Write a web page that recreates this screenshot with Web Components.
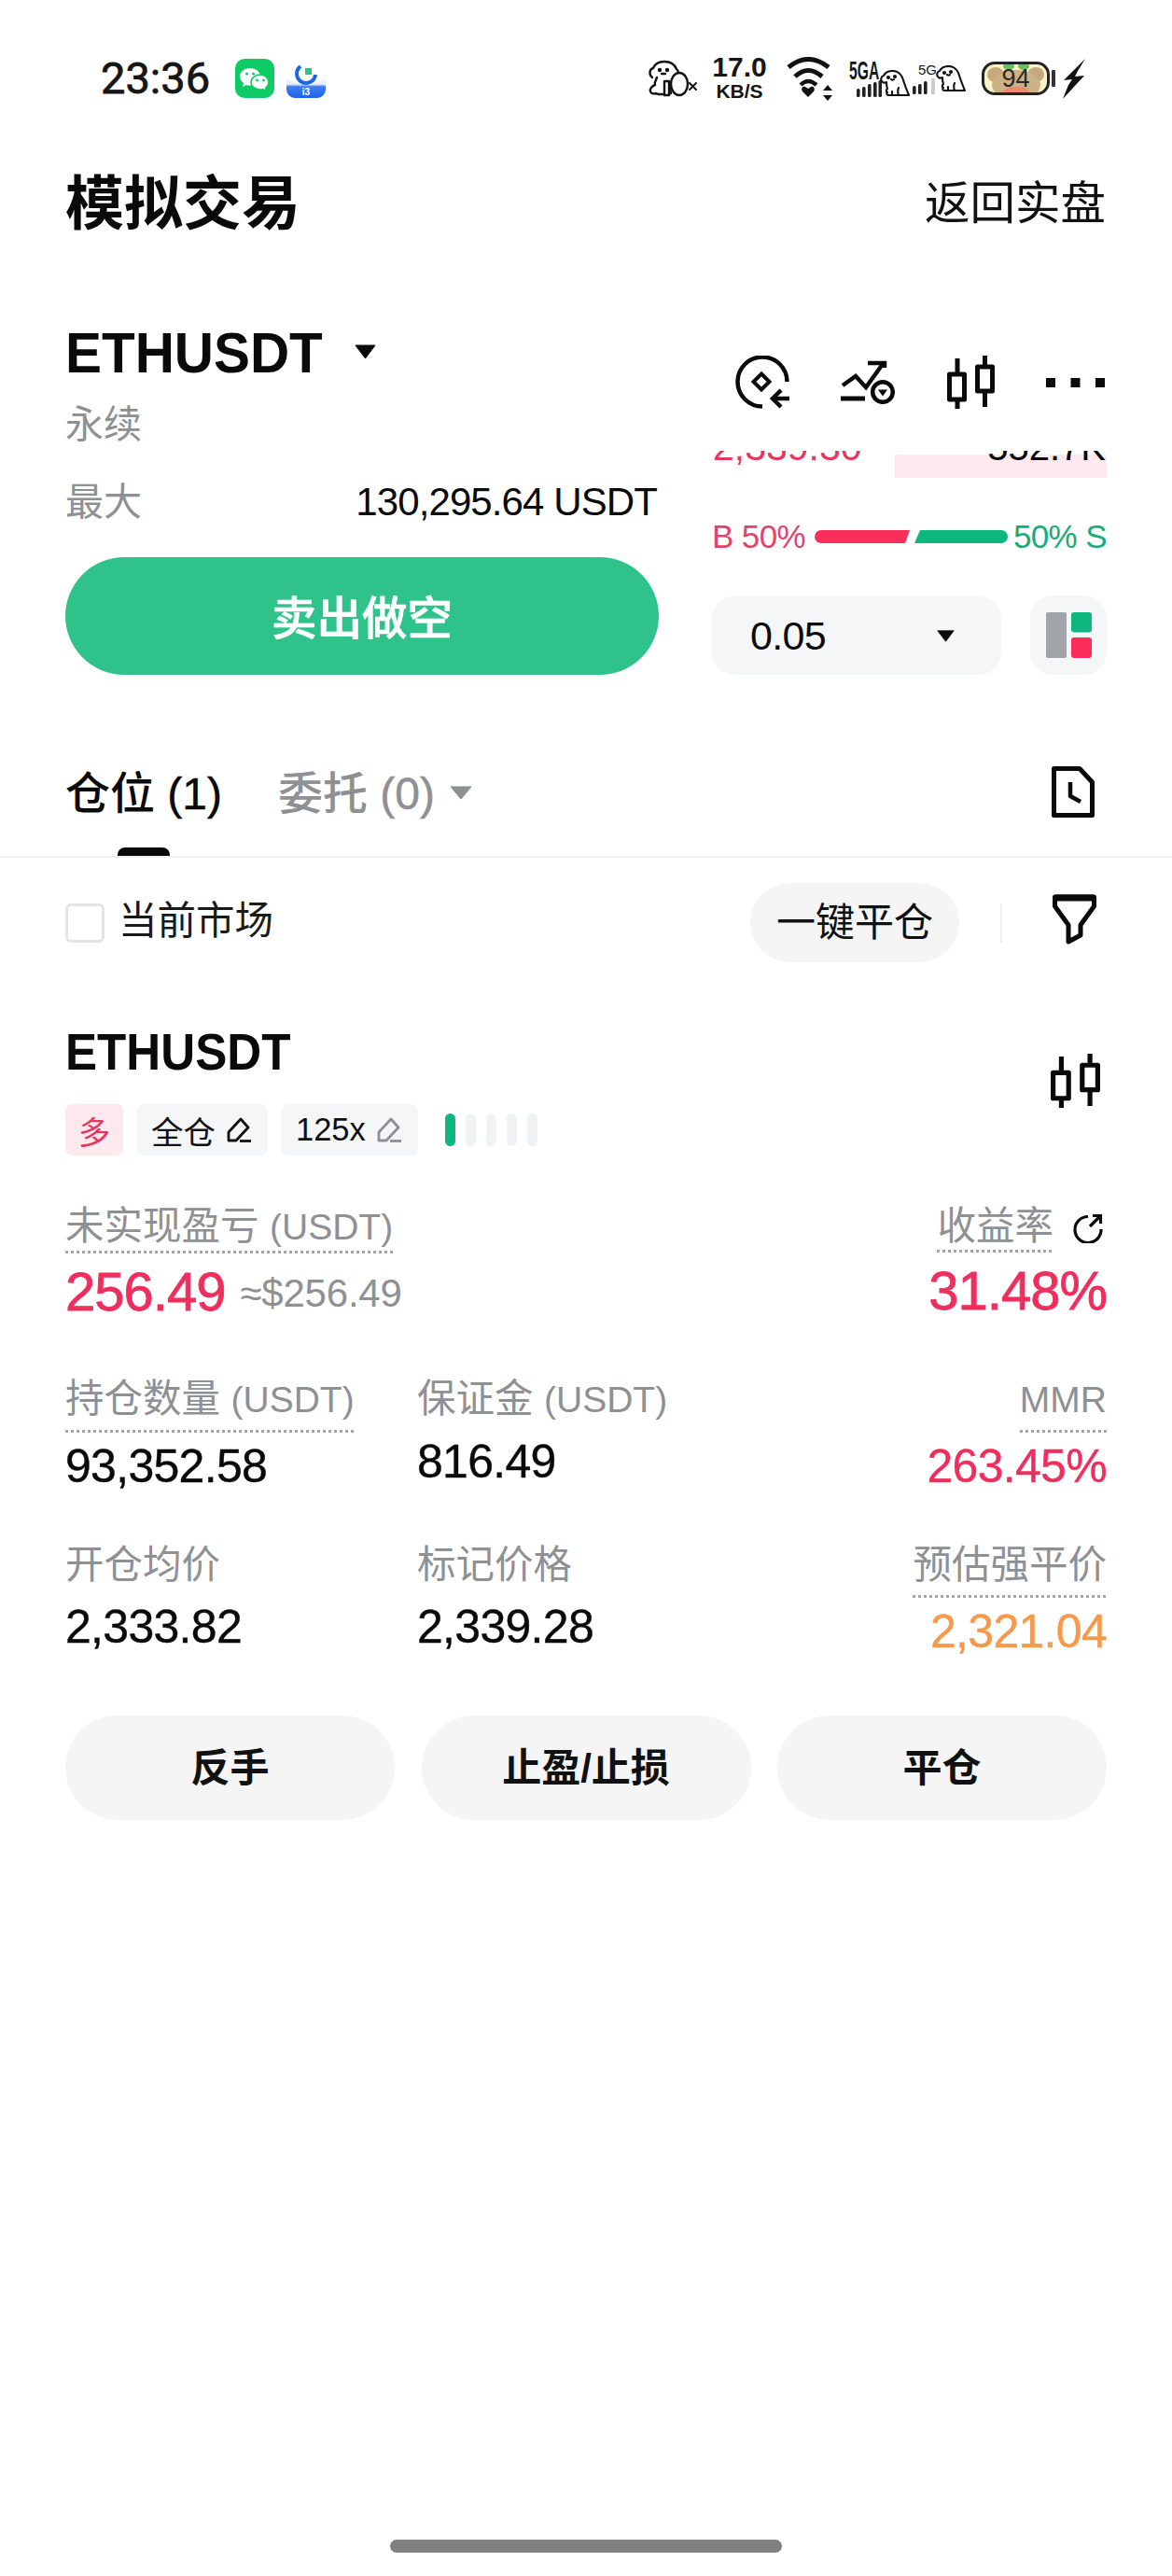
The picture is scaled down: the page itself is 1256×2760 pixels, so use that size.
<!DOCTYPE html>
<html lang="zh"><head><meta charset="utf-8"><title>模拟交易</title>
<style>
html,body{margin:0;padding:0;background:#fff}
body{width:1256px;height:2760px;overflow:hidden;font-family:"Liberation Sans","Noto Sans CJK SC",sans-serif;color:#0a0a0a}
</style></head><body>
<x-app>
  <x-status-bar></x-status-bar>
  <x-nav-header><span slot="title">模拟交易</span><span slot="action">返回实盘</span></x-nav-header>
  <x-trade-panel></x-trade-panel>
  <x-order-tabs></x-order-tabs>
  <x-filter-row></x-filter-row>
  <x-position-card></x-position-card>
  <x-home-bar></x-home-bar>
</x-app>
<script>
const dog=(w,h)=>`<svg width="${w}" height="${h}" viewBox="0 0 32 29" fill="#fff" stroke="#111" stroke-width="2.100" stroke-linejoin="round" stroke-linecap="round"><path d="M3 13C0 11 1 7 4 6 6 2 10 1 14 1c5 0 8 3 10 7 2 6 4 12 7 19H9c-2 0-2-2-1-3-2-1-1-3 0-4-1-3-1-5-1-7-2 1-3 1-4 0z"/><path d="M20 27c-1-3-1-6 0-8M13 27v-4" fill="none"/><circle cx="9" cy="8" r="1" fill="#111"/><circle cx="16" cy="7" r="1" fill="#111"/><path d="M12 10c1 1 2 1 3 0" fill="none"/></svg>`;
const ICONS={
 wechat:`<svg width="42" height="42" viewBox="0 0 42 42"><rect width="42" height="42" rx="10" fill="#0ecb66"/><path d="M16 10c-6 0-11 4-11 9 0 3 2 5 4 7l-1 4 4-2c1 .4 2 .5 4 .5 6 0 11-4 11-9.500S22 10 16 10z" fill="#fff"/><path d="M27 17c-5.500 0-10 3.500-10 8s4.500 8 10 8c1 0 2 0 3-.4l3.500 2-.8-3.500c2-1.500 3.300-3.600 3.300-6.100 0-4.500-4.500-8-9-8z" fill="#fff" stroke="#0ecb66" stroke-width="1.500"/><circle cx="12.500" cy="16" r="1.500" fill="#0ecb66"/><circle cx="19.500" cy="16" r="1.500" fill="#0ecb66"/><circle cx="23.500" cy="23" r="1.400" fill="#0ecb66"/><circle cx="30.500" cy="23" r="1.400" fill="#0ecb66"/></svg>`,
 bowl:`<svg width="42" height="37" viewBox="0 0 42 37"><defs><linearGradient id="g" x1="0" y1="0" x2="0" y2="1"><stop offset="0" stop-color="#f3f5fb"/><stop offset=".3" stop-color="#e6ecfa"/><stop offset=".42" stop-color="#3d7df2"/><stop offset="1" stop-color="#1f62ea"/></linearGradient></defs><path d="M0 16q21 12 42 0v12a9 9 0 0 1-9 9H9a9 9 0 0 1-9-9z" fill="url(#g)"/><path d="M15 3a10 10 0 1 0 16 9" fill="none" stroke="#1768e6" stroke-width="4"/><rect x="20" y="5" width="7" height="7" fill="#2cc38a"/><text x="21" y="33.500" text-anchor="middle" font-size="10" font-weight="700" fill="#fff" font-family="Liberation Sans">i3</text></svg>`,
 dogEgg:`<svg width="55" height="40" viewBox="0 0 55 40" fill="#fff" stroke="#111" stroke-width="2.400" stroke-linejoin="round" stroke-linecap="round"><path d="M6 19C2 16 3 10 7 9c2-5 7-7 12-7 6 0 11 3 13 8 2 1 3 6 0 8"/><path d="M11 19c-1 3-3 5-2 8-3 1-6 4-5 7 1 2 3 3 5 2l4 1h10"/><path d="M19 23h5v15h-5zM24 24l2 12"/><ellipse cx="35" cy="26" rx="9" ry="12"/><circle cx="14" cy="11" r="1" fill="#111"/><circle cx="22" cy="11" r="1" fill="#111"/><path d="M16 15h4"/><path d="M46 25l7 7M53 25l-7 7" stroke-width="2"/></svg>`,
 dog:dog(32,29),
 wifi:`<svg width="50" height="47" viewBox="0 0 50 47" fill="none" stroke="#111" stroke-width="5"><path d="M2 11Q23 -6 45 11"/><path d="M9 21Q23 8 38 21"/><path d="M15 30Q23 22 32 30" stroke-width="4.500"/><path d="M23 43l-6-6c-2-3 0-6 3-5l3 2 3-2c3-1 5 2 3 5z" fill="#111" stroke="none"/><path d="M39 36l5-6 5 6zM39 41l5 6 5-6z" fill="#111" stroke="none"/></svg>`,
 bars5:`<svg width="28" height="18" viewBox="0 0 28 18" fill="#222"><rect x="1" y="9" width="3.600" height="9" rx="1.500"/><rect x="7" y="7" width="3.600" height="11" rx="1.500"/><rect x="13" y="4" width="3.600" height="14" rx="1.500"/><rect x="19" y="2" width="3.600" height="16" rx="1.500"/><rect x="24.500" y="0" width="3.500" height="18" rx="1.500"/></svg>`,
 bars4:`<svg width="25" height="17" viewBox="0 0 25 17" fill="#222"><rect x="0" y="8" width="3.600" height="9" rx="1.500"/><rect x="6" y="6" width="3.600" height="11" rx="1.500"/><rect x="12" y="3" width="3.600" height="14" rx="1.500"/><rect x="20" y="0" width="4" height="17" fill="#ccc"/></svg>`,
 bolt:`<svg width="24" height="43" viewBox="0 0 24 43" fill="#111"><path d="M24 0L1 23l9-1-4 6-6 15 23-25-10 1 3-6z"/></svg>`,
 rebate:`<svg width="58" height="57" viewBox="0 0 58 57" fill="none" stroke="#0a0a0a" stroke-width="4.500"><path d="M55.500 28A26.500 26.500 0 1 0 29 54.500"/><path d="M28 19.500L36.500 28 28 36.500 19.500 28z" stroke-width="4"/><path d="M58 46H42"/><path d="M49 37l-9 9 9 9"/></svg>`,
 trend:`<svg width="58" height="47" viewBox="0 0 58 47" fill="none" stroke="#0a0a0a" stroke-width="4.500"><path d="M2 27L16 17 27 29 45 4"/><path d="M29 3H47V8"/><path d="M0 41H26" stroke-width="5"/><circle cx="45" cy="34" r="10.800"/><path d="M40 31.500H50L45 38.500z" fill="#0a0a0a" stroke="none"/></svg>`,
 candles:`<svg width="100%" height="100%" viewBox="0 0 51 57" preserveAspectRatio="none" fill="none" stroke="#0a0a0a" stroke-width="5" stroke-linejoin="round"><rect x="2.500" y="20" width="16" height="27"/><path d="M11 3V20M11 47V57"/><rect x="32.500" y="12" width="16" height="26"/><path d="M40.500 0V12M40.500 38V55"/></svg>`,
 dots:`<svg width="63" height="10" viewBox="0 0 63 10" fill="#0a0a0a"><rect width="10" height="10"/><rect x="26.500" width="10" height="10"/><rect x="53" width="10" height="10"/></svg>`,
 bsbar:`<svg width="207" height="14" viewBox="0 0 207 14"><path d="M7 0H102L97 14H7A7 7 0 0 1 7 0z" fill="#fb2d5b"/><path d="M113 0H200A7 7 0 0 1 200 14H107z" fill="#0db77d"/></svg>`,
 doc:`<svg width="46" height="55" viewBox="0 0 46 55" fill="none" stroke="#0a0a0a" stroke-width="5" stroke-linejoin="round"><path d="M2.500 2.500H30L43.500 17V52.500H2.500z"/><path d="M20 17V32L31 38" stroke-width="4.500"/></svg>`,
 filter:`<svg width="47" height="54" viewBox="0 0 47 54" fill="none" stroke="#0a0a0a" stroke-width="5" stroke-linejoin="round"><path d="M2.500 3H44.500V13L30 33V44L17 51V33L2.500 13z"/><path d="M3 4H44" stroke-width="7"/></svg>`,
 penDark:`<svg width="26" height="27" viewBox="0 0 26 27" fill="none" stroke="#111" stroke-width="2.800" stroke-linejoin="round"><path d="M15 2l8 9-13 14H2v-9z"/><path d="M14 25.500H26"/></svg>`,
 penGrey:`<svg width="26" height="27" viewBox="0 0 26 27" fill="none" stroke="#8e9094" stroke-width="2.800" stroke-linejoin="round"><path d="M15 2l8 9-13 14H2v-9z"/><path d="M14 25.500H26"/></svg>`,
 share:`<svg width="32" height="32" viewBox="0 0 32 32" fill="none" stroke="#0a0a0a" stroke-width="3.200"><path d="M16 3.500A14 14 0 1 0 30 17"/><path d="M18 14L29 3"/><path d="M21 2.500H29.500V11"/></svg>`,
 layout:`<svg width="49" height="49" viewBox="0 0 49 49"><rect width="22" height="49" rx="2" fill="#a0a3a7"/><rect x="27" width="22" height="21.500" rx="3" fill="#0db77d"/><rect x="27" y="27" width="22" height="22" rx="3" fill="#fb2d5b"/></svg>`
};
const define=(tag,css,html)=>customElements.define(tag,class extends HTMLElement{
  constructor(){super();this.attachShadow({mode:'open'})}
  connectedCallback(){this.shadowRoot.innerHTML=`<style>${css}</style>${typeof html==='function'?html(this):html}`}
});
define('x-app',':host{display:flex;flex-direction:column;height:2760px}','<slot></slot>');
define('x-icon',':host{display:block;line-height:0;flex:none}svg{display:block}',el=>ICONS[el.getAttribute('name')]);
define('x-caret',':host{display:block;flex:none;width:var(--w,24px);height:var(--h,16px)}svg{display:block;width:100%;height:100%}',
 el=>`<svg viewBox="0 0 24 16" preserveAspectRatio="none"><path d="M1 1H23L12 15z" fill="${el.getAttribute('color')||'#0a0a0a'}" stroke="${el.getAttribute('color')||'#0a0a0a'}" stroke-width="1" stroke-linejoin="round"/></svg>`);

define('x-status-bar',`
 :host{display:flex;align-items:center;height:168px;padding:0 93px 0 108px;box-sizing:border-box;color:#161616}
 .time{font:400 47px/52px Roboto,"Liberation Sans",sans-serif;-webkit-text-stroke:.8px currentColor;margin-right:27px}
 .gap{margin-left:13px;margin-top:5px}
 .right{margin-left:auto;display:flex;align-items:center}
 .speed{width:59px;margin:-3px 21px 0 15px;text-align:center;font-weight:700}
 .speed b{display:block;font-size:30px;line-height:28px}
 .speed i{display:block;font:700 21px/18px "Liberation Sans",sans-serif;margin-top:3px}
 .sig{display:flex;flex-direction:column;width:35px}
 .sig span{display:block;font-weight:700;font-size:28px;line-height:21px;transform:scaleX(.56);transform-origin:0 50%;white-space:nowrap}
 .sig x-icon{margin:0 0 0 7px}
 .sig2{width:25px;margin-left:3px;display:flex;flex-direction:column}
 .sig2 span{font-size:15px;line-height:14px;margin:0 0 2px 6px;font-weight:500}
 .batt{position:relative;width:73px;height:36px;box-sizing:border-box;margin-left:17px;border:3px solid #222;border-radius:14px;overflow:hidden;background:#f8f2c4;display:flex;align-items:center;justify-content:center;font-size:27px;color:#2a2a2a}
 .batt svg{position:absolute;inset:0}
 .batt span{position:relative}
 .nub{width:4px;height:18px;background:#333;margin:0 8px 0 2px;border-radius:1px}
 .dog2{margin-left:-2px;margin-top:10px}.dog3{margin-top:0}
 .wifi{margin-right:17px}
`,`
 <span class="time">23:36</span><x-icon name="wechat"></x-icon><x-icon class="gap" name="bowl"></x-icon>
 <div class="right">
  <x-icon name="dogEgg"></x-icon>
  <div class="speed"><b>17.0</b><i>KB/S</i></div>
  <x-icon class="wifi" name="wifi"></x-icon>
  <div class="sig"><span>5GA</span><x-icon name="bars5"></x-icon></div>
  <x-icon class="dog2" name="dog"></x-icon>
  <div class="sig2"><span>5G</span><x-icon name="bars4"></x-icon></div>
  <x-icon class="dog3" name="dog"></x-icon>
  <div class="batt"><svg width="67" height="30" viewBox="0 0 67 30"><ellipse cx="12" cy="11" rx="9" ry="8" fill="#c8a97e"/><ellipse cx="55" cy="11" rx="9" ry="8" fill="#c8a97e"/><ellipse cx="34" cy="22" rx="26" ry="16" fill="#cdb083"/><ellipse cx="34" cy="30" rx="14" ry="6" fill="#ea8a70"/><ellipse cx="26" cy="2" rx="6" ry="4" fill="#6bbf5a"/><ellipse cx="42" cy="2" rx="6" ry="4" fill="#6bbf5a"/></svg><span>94</span></div>
  <div class="nub"></div>
  <x-icon name="bolt"></x-icon>
 </div>`);

define('x-nav-header',`
 :host{display:flex;align-items:center;justify-content:space-between;height:96px;box-sizing:border-box;padding:3px 71px 0 70px}
 .t{font-size:63px;font-weight:700;line-height:80px}
 .a{font-size:48.500px;line-height:60px;color:#111}
`,`<div class="t"><slot name="title"></slot></div><div class="a"><slot name="action"></slot></div>`);

define('x-trade-panel',`
 :host{display:flex;justify-content:space-between;padding:0 70px;height:459px}
 .left{width:636px;padding-top:88px}
 .pair{display:flex;align-items:center;height:52px;padding-left:0}
 .pair b{display:block;font-size:62px;line-height:52px;transform:scaleX(.942);transform-origin:0 50%}
 .pair x-caret{margin-left:17px;--w:23px;--h:16px;margin-top:-2px}
 .sub{height:52px;margin-top:25px;font-size:41px;line-height:52px;color:#8e9094}
 .max{display:flex;justify-content:space-between;height:52px;margin-top:31px;padding:0 2px 0 0;font-size:42px;letter-spacing:-.9px;line-height:52px}
 .max span{color:#8e9094;font-size:41px;letter-spacing:0}
 .sell{height:126px;margin-top:33px;padding-bottom:3px;box-sizing:border-box;border-radius:63px;background:#2fc38b;color:#fff;font-size:48.500px;font-weight:500;-webkit-text-stroke:.7px #fff;display:flex;align-items:center;justify-content:center}
 .right{width:423px;padding-top:117px}
 .tools{display:flex;align-items:center;justify-content:space-between;height:57px;padding:0 2px 0 25px}
 .book{display:flex;justify-content:space-between;height:29px;margin-top:45px;overflow:hidden;padding:0 1px;font-size:41px;line-height:40px;background:linear-gradient(#fde9ee,#fde9ee) right bottom/227px 25px no-repeat}
 .book span{display:block;margin-top:-24px}
 .book span+span{font-size:40px}
 .red{color:#e8365f}
 .bs{display:flex;align-items:center;justify-content:space-between;height:50px;margin-top:38px;padding:0;font-size:35px;letter-spacing:-.6px}
 .bs .g{color:#15ad7c}.bs .r{color:#e5426a}
 .bs x-icon{margin-left:3px}
 .qty{display:flex;justify-content:space-between;margin-top:38px;height:85px}
 .sel{width:310px;height:84px;margin-top:1px;box-sizing:border-box;background:#f5f6f7;border-radius:24px;display:flex;align-items:center;justify-content:space-between;padding:0 50px 0 41px;font-size:43px;letter-spacing:-.7px}
 .sel x-caret{--w:19px;--h:13px}
 .lay{width:82px;height:85px;background:#f5f6f7;border-radius:24px;display:flex;align-items:center;justify-content:center}
`,`
 <div class="left">
  <div class="pair"><b>ETHUSDT</b><x-caret></x-caret></div>
  <div class="sub">永续</div>
  <div class="max"><span>最大</span>130,295.64 USDT</div>
  <div class="sell">卖出做空</div>
 </div>
 <div class="right">
  <div class="tools"><x-icon name="rebate"></x-icon><x-icon name="trend"></x-icon><x-icon name="candles" style="width:51px;height:57px"></x-icon><x-icon name="dots"></x-icon></div>
  <div class="book"><span class="red">2,339.30</span><span>552.7K</span></div>
  <div class="bs"><span class="r">B 50%</span><x-icon name="bsbar"></x-icon><span class="g">50% S</span></div>
  <div class="qty"><div class="sel">0.05<x-caret></x-caret></div><div class="lay"><x-icon name="layout"></x-icon></div></div>
 </div>`);

define('x-order-tabs',`
 :host{display:flex;justify-content:space-between;height:196px;box-sizing:border-box;padding:0 83px 0 70px;border-bottom:2px solid #f1f1f1}
 .tabs{display:flex}
 .tab{display:flex;flex-direction:column;align-items:center;padding-top:100px;font-size:48px;line-height:56px;font-weight:500;white-space:nowrap}
 .tab b{font-weight:500;-webkit-text-stroke:.5px currentColor}
 .tab i{display:block;width:56px;height:9px;border-radius:8px 8px 0 0;background:#0a0a0a;margin-top:29px}
 .off{color:#8e9094;margin-left:60px;flex-direction:row;align-items:flex-start}
 .off x-caret{--w:24px;--h:15px;margin:19px 0 0 16px}
`,`<div class="tabs"><div class="tab"><span>仓位 <b>(1)</b></span><i></i></div><div class="tab off"><span>委托 <b>(0)</b></span><x-caret color="#8e9094"></x-caret></div></div><div style="padding-top:98px"><x-icon name="doc"></x-icon></div>`);

define('x-filter-row',`
 :host{display:flex;align-items:center;height:112px;box-sizing:border-box;padding:27px 70px 0 70px}
 .box{width:42px;height:42px;box-sizing:border-box;border:3px solid #e4e4e4;border-radius:6px;margin-right:15px}
 .lab{font-size:41.500px;line-height:48px;color:#1a1a1a;margin-top:-3px}
 .pill{margin-left:auto;width:224px;height:85px;padding-bottom:8px;box-sizing:border-box;border-radius:43px;background:#f5f5f5;display:flex;align-items:center;justify-content:center;font-size:42px;color:#111}
 .div{width:2px;height:42px;background:#eee;margin:0 54px 0 44px}
 x-icon{margin:-8px 11px 0 0}
`,`<div class="box"></div><span class="lab">当前市场</span><div class="pill">一键平仓</div><div class="div"></div><x-icon name="filter"></x-icon>`);

define('x-tag',`
 :host{display:flex;align-items:center;gap:12px;height:55px;box-sizing:border-box;padding:0 18px 0 15px;border-radius:7px;background:#f5f6f7;font-size:34.500px;color:#111}
 :host([tone=red]){background:#fde9ee;color:#e8365f;padding:0;width:62px;justify-content:center}
`,`<slot></slot>`);

define('x-metric',`
 :host{display:flex;flex-direction:column;align-items:flex-start}
 :host([align=end]){align-items:flex-end}
 .lr{display:flex;align-items:flex-start;gap:21px}
 ::slotted([slot=after]){margin:8px 4px 0 0}
 .l{font-size:41.500px;line-height:44px;color:#8e9094;white-space:nowrap}
 :host([dotted]) .l{padding-bottom:13px;background:repeating-linear-gradient(90deg,#a3a5a8 0 3px,transparent 3px 6px) left bottom/100% 3px no-repeat}
 :host([big]) .l{padding-bottom:6px}
 .v{font-size:50px;letter-spacing:-.7px;line-height:52px;margin-top:18px;color:var(--c,#0a0a0a);white-space:nowrap;-webkit-text-stroke:.4px currentColor}
 :host([dotted]) .v{margin-top:10px}
 :host([big]) .v{font-size:58px;letter-spacing:-1px;line-height:60px;margin-top:11px;-webkit-text-stroke:.8px currentColor}
 :host([tone=red]){--c:#ee2f5e}
 :host([tone=orange]){--c:#f5994b}
`,`<div class="lr"><div class="l"><slot name="label"></slot></div><slot name="after"></slot></div><div class="v"><slot name="value"></slot></div>`);

define('x-pill',`:host{display:flex;align-items:center;justify-content:center;height:112px;padding-bottom:7px;box-sizing:border-box;border-radius:56px;background:#f5f5f5;font-size:42px;font-weight:700;color:#111}`,`<slot></slot>`);

define('x-position-card',`
 :host{display:block;padding:0 70px}
 .head{display:flex;justify-content:space-between;margin-top:70px}
 .title{font-size:55px;line-height:52px;font-weight:700;transform:scaleX(.93);transform-origin:0 50%}
 .tags{display:flex;gap:15px;margin-top:30px;align-items:center}
 .risk{display:flex;gap:11px;margin-left:14px}
 .risk i{display:block;width:11px;height:35px;border-radius:6px;background:#f1f2f3}
 .risk i:first-child{background:#0db77d}
 .cand{width:53px;height:58px;margin:28px 7px 0 0}
 .row1{display:flex;justify-content:space-between;margin-top:54px}
 .grid{display:grid;grid-template-columns:377px 1fr auto;row-gap:58px;margin-top:57px}
 .sm{font-size:42px;letter-spacing:-.2px;color:#8e9094;-webkit-text-stroke:0;margin-left:16px;position:relative;top:-4px}
 .u{font-size:39px}
 .btns{display:grid;grid-template-columns:repeat(3,1fr);gap:28.500px;margin-top:64px}
`,`
 <div class="head"><div>
   <div class="title">ETHUSDT</div>
   <div class="tags"><x-tag tone="red">多</x-tag><x-tag>全仓<x-icon name="penDark"></x-icon></x-tag><x-tag>125x<x-icon name="penGrey"></x-icon></x-tag>
   <div class="risk"><i></i><i></i><i></i><i></i><i></i></div></div>
 </div><x-icon class="cand" name="candles"></x-icon></div>
 <div class="row1">
  <x-metric dotted big tone="red"><span slot="label">未实现盈亏 <span class="u">(USDT)</span></span><span slot="value">256.49<span class="sm">≈$256.49</span></span></x-metric>
  <x-metric dotted big align="end" tone="red"><span slot="label">收益率</span><x-icon slot="after" name="share"></x-icon><span slot="value">31.48%</span></x-metric>
 </div>
 <div class="grid">
  <x-metric dotted><span slot="label">持仓数量 <span class="u">(USDT)</span></span><span slot="value">93,352.58</span></x-metric>
  <x-metric><span slot="label">保证金 <span class="u">(USDT)</span></span><span slot="value">816.49</span></x-metric>
  <x-metric dotted align="end" tone="red"><span slot="label" class="u">MMR</span><span slot="value">263.45%</span></x-metric>
  <x-metric><span slot="label">开仓均价</span><span slot="value">2,333.82</span></x-metric>
  <x-metric><span slot="label">标记价格</span><span slot="value">2,339.28</span></x-metric>
  <x-metric dotted align="end" tone="orange"><span slot="label">预估强平价</span><span slot="value">2,321.04</span></x-metric>
 </div>
 <div class="btns"><x-pill>反手</x-pill><x-pill>止盈/止损</x-pill><x-pill>平仓</x-pill></div>`);

define('x-home-bar',`:host{display:block;margin:auto auto 25px;width:420px;height:14px;border-radius:7px;background:#808080}`,``);
</script>
</body></html>
